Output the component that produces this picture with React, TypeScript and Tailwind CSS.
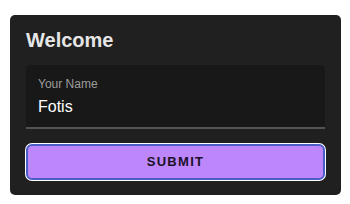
import React from "react";

export default function App() {
  return (
    <div className="w-[350px] h-[204px] bg-white pt-[15px] pl-[10px]" style={{ fontFamily: '"Liberation Sans", Arial, sans-serif' }}>
      <div className="w-[331px] h-[180px] rounded-[5px] bg-[#202020] px-4 pt-[13px] pb-[15px] flex flex-col">
        <h1 className="text-[20px] leading-[24px] font-bold text-[#e6e6e6] mb-[13px]">Welcome</h1>
        <div className="h-[64px] rounded-t-[4px] bg-[#181818] border-b-2 border-[#535353] px-3 pt-[11px] flex flex-col">
          <label className="text-[12px] leading-[16px] text-[#9c9c9c]">Your Name</label>
          <div className="mt-[3px] text-[16px] leading-[24px] text-white">Fotis</div>
        </div>
        <button className="mt-[15px] h-[36px] w-full rounded-[6px] border-2 border-[#4b5ec8] bg-[#bd86fb] shadow-[0_0_0_1px_#ffffff] text-[13px] font-bold tracking-[0.1em] text-[#1a1128]">
          SUBMIT
        </button>
      </div>
    </div>
  );
}
